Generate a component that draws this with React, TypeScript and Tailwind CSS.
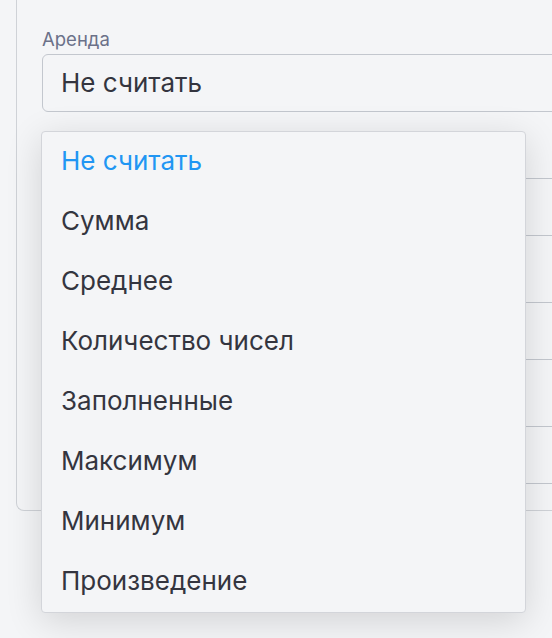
import React from "react";

const items = [
  "Не считать",
  "Сумма",
  "Среднее",
  "Количество чисел",
  "Заполненные",
  "Максимум",
  "Минимум",
  "Произведение",
];

function Field({ label, value }: { label?: string; value?: string }) {
  return (
    <div className="flex flex-col">
      <div className="h-[24px] leading-[24px] text-[18.5px] text-[#6b7189]">{label}</div>
      <div className="mt-[3px] h-[58px] border-[1.5px] border-[#c3c7ce] rounded-[6px] bg-[#f4f5f7] flex items-center pl-[18px] pb-[2px] text-[26px] text-[#34353f]">
        {value}
      </div>
    </div>
  );
}

export default function App() {
  return (
    <div
      className="relative w-[552px] h-[638px] overflow-hidden bg-[#f4f5f7]"
      style={{ fontFamily: "Inter, Roboto, 'Noto Sans', sans-serif" }}
    >
      <div className="ml-[16px] mt-[-20px] w-[600px] h-[531px] border-l-[1.5px] border-b-[1.5px] border-[#cfd2d7] rounded-bl-[8px] bg-[#f4f5f7] pl-[25px] pt-[47px] flex flex-col gap-[39px]">
        <Field label="Аренда" value="Не считать" />
        <Field />
        <Field />
        <Field />
      </div>

      <div className="absolute left-[41px] top-[131px] w-[485px] border border-[#d3d5da] rounded-[4px] bg-[#f4f5f7] shadow-[0_8px_36px_rgba(0,0,0,0.14)]">
        {items.map((it, i) => (
          <div
            key={it}
            className={
              "h-[60px] flex items-center pl-[19px] pb-[3px] text-[26px] " +
              (i === 0 ? "text-[#2196f3]" : "text-[#34353f]")
            }
          >
            {it}
          </div>
        ))}
      </div>
    </div>
  );
}
